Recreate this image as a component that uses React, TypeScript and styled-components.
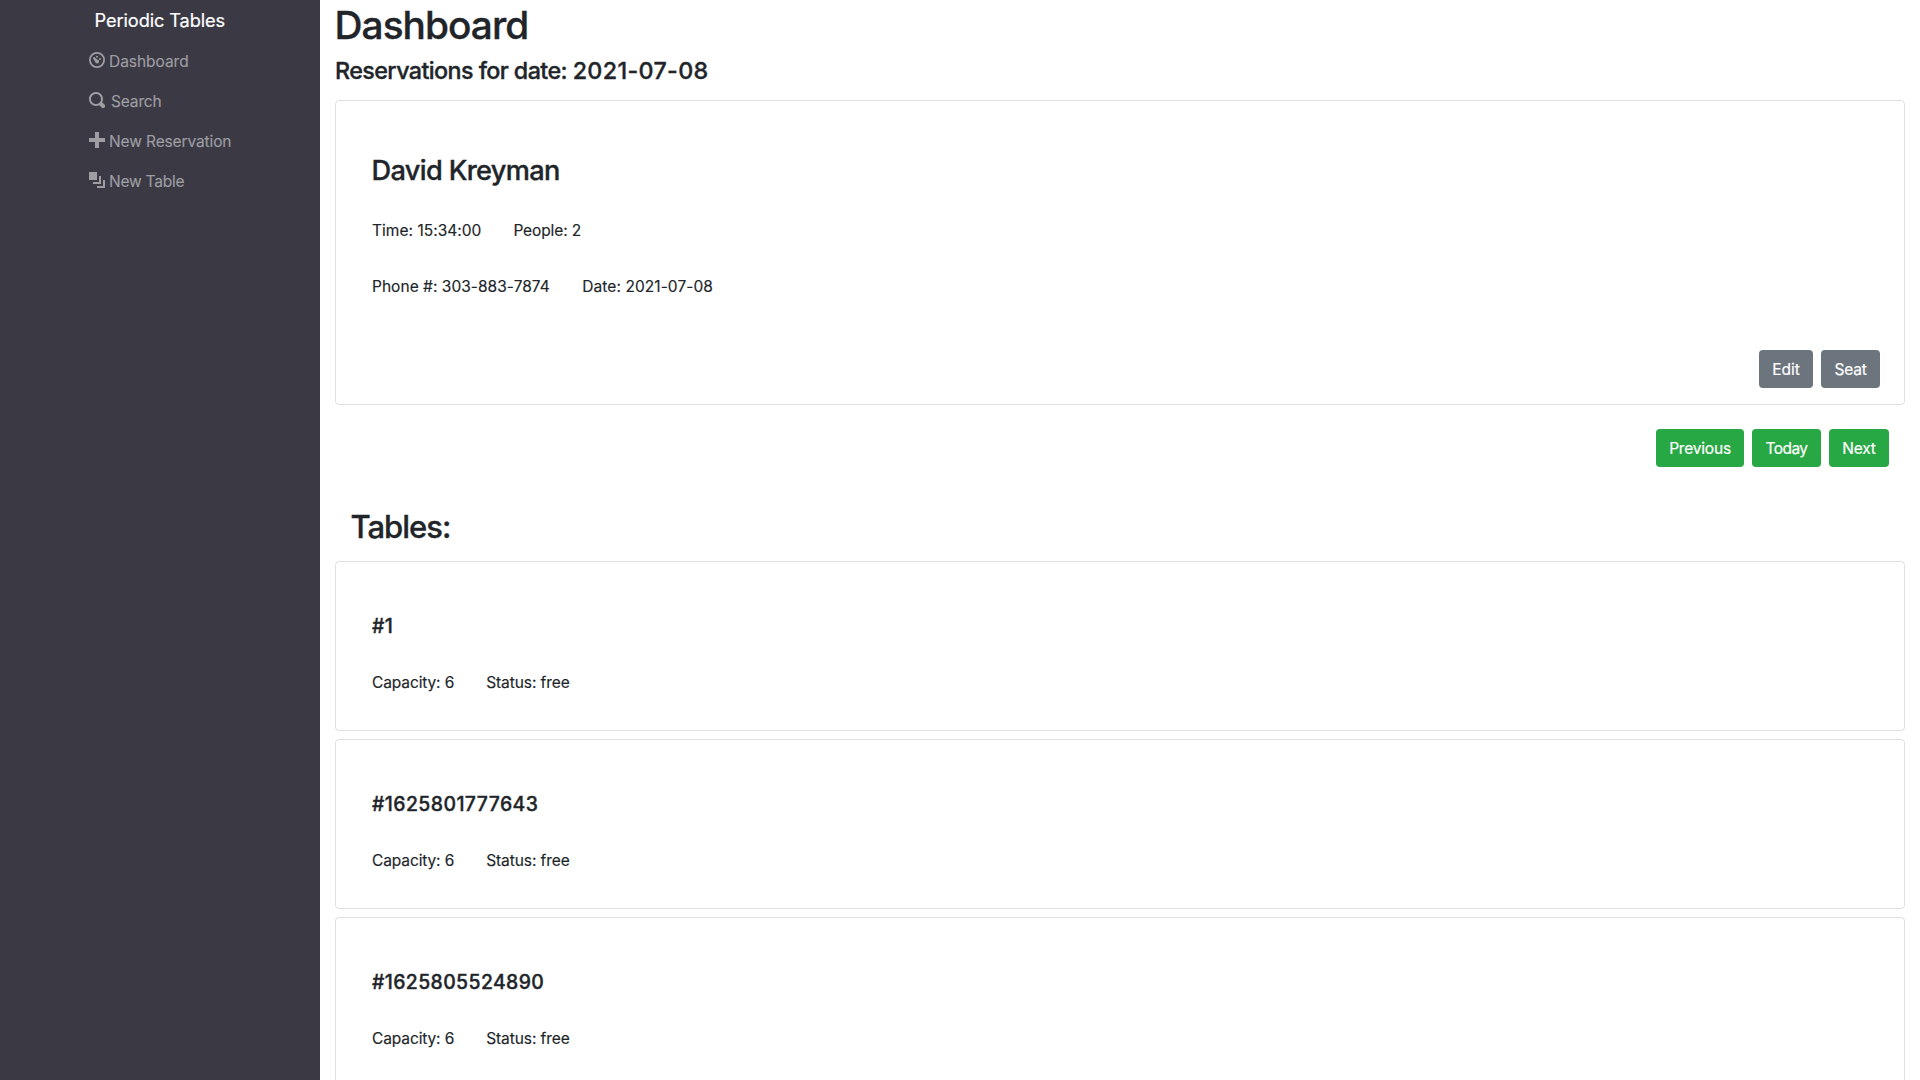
import React from "react";
import styled, { createGlobalStyle } from "styled-components";

const Global = createGlobalStyle`
  *, *::before, *::after { box-sizing: border-box; }
  body {
    margin: 0;
    background: #fff;
    color: #212529;
    font-family: Inter, "Liberation Sans", sans-serif;
    font-size: 15.5px;
    line-height: 24px;
    overflow: hidden;
  }
  h1, h2, h3, h4, h5, p { margin: 0; font-weight: 500; -webkit-text-stroke: 0.35px currentColor; }
`;

const Layout = styled.div`
  display: flex;
  height: 100vh;
  overflow: hidden;
`;

const Sidebar = styled.nav`
  flex: 0 0 320px;
  background: #3b3a44;
`;

const Brand = styled.div`
  height: 41px;
  padding-left: 94.6px;
  color: #fff;
  font-size: 18.2px;
  line-height: 40px;
  letter-spacing: -0.1px;
  -webkit-text-stroke: 0.2px currentColor;
`;

const NavList = styled.ul`
  margin: 0;
  padding: 0 0 0 89px;
  list-style: none;
`;

const NavItem = styled.li<{ $gap: number }>`
  display: flex;
  align-items: center;
  gap: ${(p) => p.$gap}px;
  height: 40px;
  color: #9d9da2;

  svg {
    flex: none;
    width: 16px;
    height: 16px;
    fill: currentColor;
    margin-bottom: 2px;
  }
`;

const Label = styled.span<{ $spacing?: number }>`
  padding-top: 2px;
  line-height: 24px;
  letter-spacing: ${(p) => p.$spacing ?? 0}px;
  white-space: nowrap;
  -webkit-text-stroke: 0.15px currentColor;
`;

const Main = styled.main`
  flex: 1;
  min-width: 0;
  padding: 0 15px;
`;

const Title = styled.h1`
  margin-left: -0.5px;
  font-size: 38.8px;
  line-height: 50px;
  letter-spacing: -0.95px;
`;

const Subtitle = styled.h4`
  margin: 6px 0 15px;
  font-size: 23.3px;
  line-height: 29px;
  letter-spacing: -0.58px;
`;

const DateText = styled.span`
  letter-spacing: 0.33px;
`;

const Card = styled.section<{ $height: number }>`
  display: flex;
  flex-direction: column;
  height: ${(p) => p.$height}px;
  padding: 52px 24px 16px 36px;
  border: 1px solid rgba(0, 0, 0, 0.125);
  border-radius: 4px;
`;

const GuestName = styled.h3`
  margin: 1px 0 29px -0.5px;
  font-size: 27.2px;
  line-height: 34px;
  letter-spacing: -0.66px;
`;

const Facts = styled.div<{ $gap?: number }>`
  display: flex;
  gap: ${(p) => p.$gap ?? 32}px;
  height: 26px;
  margin-bottom: 30px;
`;

const Actions = styled.div`
  display: flex;
  justify-content: flex-end;
  gap: 8px;
  margin-top: auto;
`;

const DateNav = styled(Actions)`
  margin: 24px 16px 40px 0;
`;

const Button = styled.button<{ $tone: "grey" | "green"; $width: number; $spacing?: number }>`
  width: ${(p) => p.$width}px;
  height: 38px;
  padding: 2px 0 0;
  border: 0;
  border-radius: 4px;
  background: ${(p) => (p.$tone === "green" ? "#28a745" : "#6c757d")};
  color: #fff;
  font: inherit;
  letter-spacing: ${(p) => p.$spacing ?? 0}px;
  -webkit-text-stroke: 0.2px currentColor;
`;

const TablesTitle = styled.h2`
  margin: 0 0 15px 15.5px;
  font-size: 31px;
  line-height: 39px;
  letter-spacing: -1px;
`;

const TableList = styled.div`
  display: flex;
  flex-direction: column;
  gap: 8px;
`;

const TableName = styled.h5<{ $spacing: number }>`
  margin-bottom: 31px;
  font-size: 19.4px;
  line-height: 24px;
  letter-spacing: ${(p) => p.$spacing}px;
`;

const DashboardIcon = () => (
  <svg viewBox="0 0 16 16">
    <circle cx="8" cy="8" r="7.1" fill="none" stroke="currentColor" strokeWidth="1.8" />
    <circle cx="8" cy="4.7" r="1" />
    <circle cx="11" cy="7" r="1" />
    <path d="M4.2 5.4c.3-.5 1-.5 1.4-.1L8.1 7.6c1 0 2 .8 2 1.9 0 1.1-.9 2-2 2-1.2 0-2-.9-2.1-1.9L4.2 6.8c-.3-.4-.3-.9 0-1.4z" />
  </svg>
);

const SearchIcon = () => (
  <svg viewBox="0 0 8 8">
    <path d="M3.5 0c-1.93 0-3.5 1.57-3.5 3.5s1.57 3.5 3.5 3.5c.59 0 1.17-.14 1.66-.41a1 1 0 0 0 .13.13l1 1a1.02 1.02 0 1 0 1.44-1.44l-1-1a1 1 0 0 0-.16-.13c.27-.49.44-1.06.44-1.66 0-1.93-1.55-3.5-3.5-3.5zm0 1c1.39 0 2.5 1.11 2.5 2.5 0 .66-.24 1.27-.66 1.72l-.03.03a1 1 0 0 0-.13.13c-.44.4-1.04.63-1.69.63-1.39 0-2.5-1.11-2.5-2.5s1.11-2.5 2.5-2.5z" />
  </svg>
);

const PlusIcon = () => (
  <svg viewBox="0 0 8 8">
    <path d="M3 0v3h-3v2h3v3h2v-3h3v-2h-3v-3h-2z" />
  </svg>
);

const LayersIcon = () => (
  <svg viewBox="0 0 8 8">
    <path d="M0 0v4h4v-4h-4zm5 2v3h-3v1h4v-4h-1zm2 2v3h-3v1h4v-4h-1z" />
  </svg>
);

const links = [
  { icon: <DashboardIcon />, text: "Dashboard", spacing: -0.04, gap: 4 },
  { icon: <SearchIcon />, text: "Search", spacing: -0.15, gap: 6 },
  { icon: <PlusIcon />, text: "New Reservation", spacing: -0.12, gap: 4 },
  { icon: <LayersIcon />, text: "New Table", spacing: -0.22, gap: 4 },
];

const tables = [
  { name: "1", spacing: 0.3 },
  { name: "1625801777643", spacing: 0.44 },
  { name: "1625805524890", spacing: 0.4 },
];

export default function App() {
  return (
    <Layout>
      <Global />
      <Sidebar>
        <Brand>Periodic Tables</Brand>
        <NavList>
          {links.map((link) => (
            <NavItem key={link.text} $gap={link.gap}>
              {link.icon}
              <Label $spacing={link.spacing}>{link.text}</Label>
            </NavItem>
          ))}
        </NavList>
      </Sidebar>
      <Main>
        <Title>Dashboard</Title>
        <Subtitle>
          Reservations for date: <DateText>2021-07-08</DateText>
        </Subtitle>
        <Card $height={305}>
          <GuestName>David Kreyman</GuestName>
          <Facts>
            <Label $spacing={0.03}>Time: 15:34:00</Label>
            <Label $spacing={-0.12}>People: 2</Label>
          </Facts>
          <Facts $gap={32.5}>
            <Label $spacing={0.03}>Phone #: 303-883-7874</Label>
            <Label $spacing={0.07}>Date: 2021-07-08</Label>
          </Facts>
          <Actions>
            <Button $tone="grey" $width={54}>Edit</Button>
            <Button $tone="grey" $width={59} $spacing={-0.2}>Seat</Button>
          </Actions>
        </Card>
        <DateNav>
          <Button $tone="green" $width={88} $spacing={-0.2}>Previous</Button>
          <Button $tone="green" $width={69} $spacing={-0.6}>Today</Button>
          <Button $tone="green" $width={60} $spacing={-0.2}>Next</Button>
        </DateNav>
        <TablesTitle>Tables:</TablesTitle>
        <TableList>
          {tables.map((table) => (
            <Card key={table.name} $height={170}>
              <TableName $spacing={table.spacing}>#{table.name}</TableName>
              <Facts>
                <Label $spacing={-0.12}>Capacity: 6</Label>
                <Label $spacing={-0.08}>Status: free</Label>
              </Facts>
            </Card>
          ))}
        </TableList>
      </Main>
    </Layout>
  );
}
